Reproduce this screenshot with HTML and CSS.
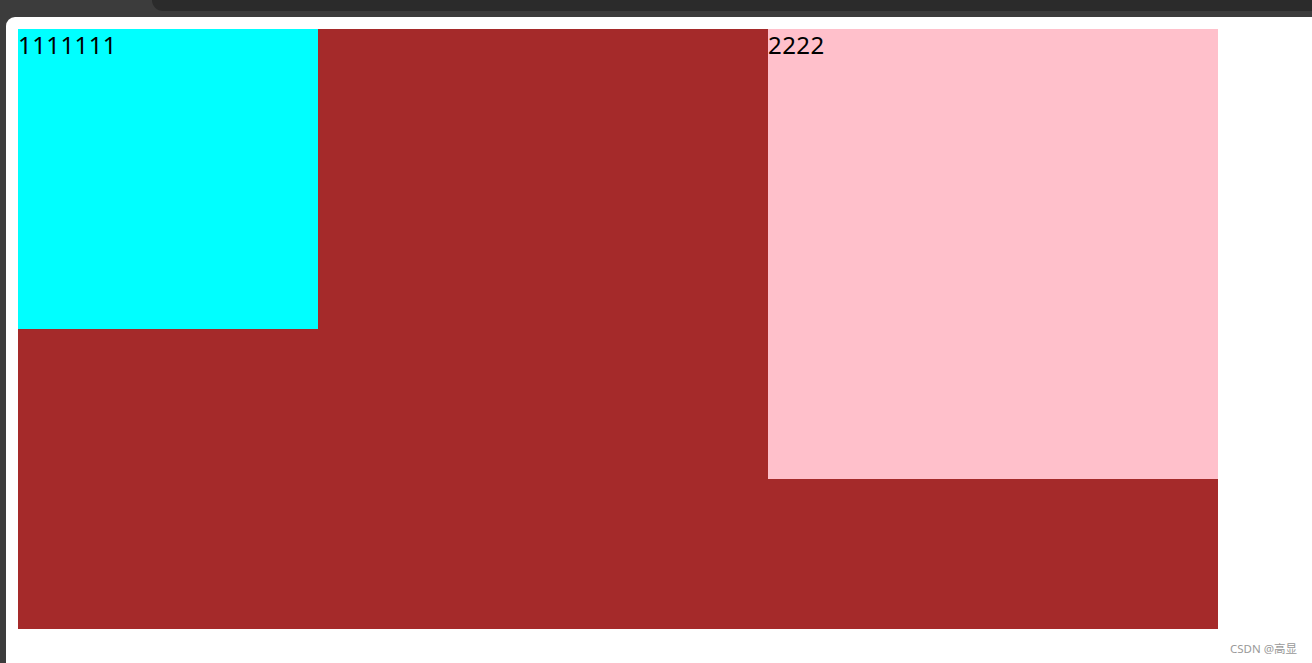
FILE: index.html
```html
<!DOCTYPE html>
<html lang="zh-CN">
<head>
  <meta charset="UTF-8" />
  <meta name="viewport" content="width=device-width, initial-scale=1.0"/>
  <title>flex demo</title>
  <link rel="stylesheet" href="styles.css">
</head>
<body>

  <div class="chrome">
    <div class="chrome-bar"></div>
  </div>

  <div class="viewport">
    <div class="wrap">
      <div class="box1">1111111</div>
      <div class="box2">2222</div>
    </div>
    <span class="mark">CSDN @高显</span>
  </div>

</body>
</html>
```

FILE: styles.css
```css
  body {
    margin: 0;
    background-color: #3c3c3c;
    font-family: "Noto Sans", "Noto Sans CJK SC", sans-serif;
    height: 663px;
    overflow: hidden;
  }

  .chrome {
    height: 17px;
    display: flex;
    justify-content: flex-end;
  }

  .chrome-bar {
    width: 1160px;
    height: 11px;
    background-color: #2b2b2b;
    border-bottom-left-radius: 11px;
  }

  .viewport {
    position: relative;
    margin-left: 6px;
    height: 646px;
    background: white;
    border-top-left-radius: 9px;
    padding: 12px;
    box-sizing: border-box;
  }

  .wrap {
    width: 1200px;
    height: 600px;
    background-color: brown;
    display: flex;
    justify-content: space-between;
    align-items: flex-start;
  }

  .box1,
  .box2 {
    font-size: 24px;
    line-height: 32px;
    letter-spacing: 0.4px;
    color: black;
  }

  .box1 {
    width: 300px;
    height: 300px;
    background-color: aqua;
  }

  .box2 {
    width: 450px;
    height: 450px;
    background-color: pink;
  }

  .mark {
    position: absolute;
    right: 15px;
    bottom: 7px;
    font-size: 11.5px;
    color: #999;
  }
```
